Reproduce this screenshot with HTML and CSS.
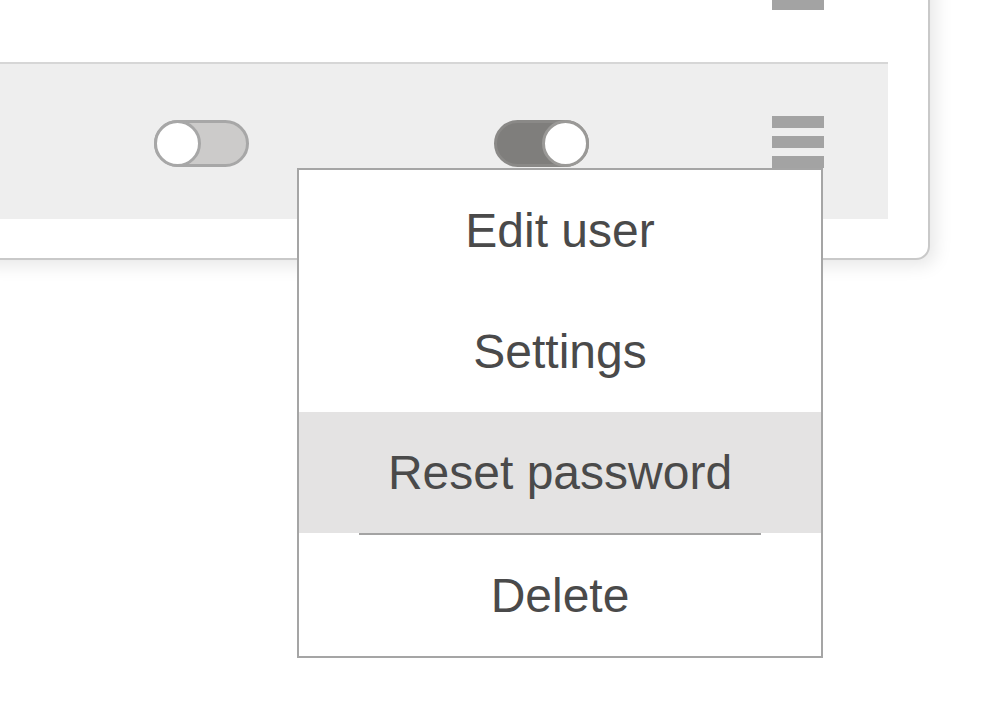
FILE: index.html
```html
<!DOCTYPE html>
<html lang="en">
<head>
<meta charset="utf-8">
<title>Users</title>
<link rel="stylesheet" href="styles.css">
</head>
<body>
<div class="page">
  <div class="card">
    <div class="row">
      <div class="cell"></div>
      <div class="cell"></div>
      <div class="cell"></div>
      <div class="cell"></div>
      <div class="cell"></div>
      <div class="cell menu-cell">
        <span class="burger"><i></i><i></i><i></i></span>
      </div>
    </div>
    <div class="row alt">
      <div class="cell"></div>
      <div class="cell"><span class="toggle"></span></div>
      <div class="cell"></div>
      <div class="cell"><span class="toggle on"></span></div>
      <div class="cell"></div>
      <div class="cell menu-cell">
        <span class="burger"><i></i><i></i><i></i></span>
        <ul class="menu">
          <li class="item">Edit user</li>
          <li class="item">Settings</li>
          <li class="item active">Reset password</li>
          <li class="sep"></li>
          <li class="item">Delete</li>
        </ul>
      </div>
    </div>
  </div>
</div>
</body>
</html>
```
FILE: styles.css
```css
html, body {
  margin: 0;
  padding: 0;
  background: #ffffff;
  font-family: "Liberation Sans", Arial, Helvetica, sans-serif;
}

.page {
  height: 726px;
  width: 988px;
  overflow: hidden;
}

.card {
  box-sizing: border-box;
  width: 960px;
  margin: -97px 0 0 -30px;
  padding: 0 40px 39px 0;
  border: 2px solid #c9c9c9;
  border-radius: 14px;
  background: #ffffff;
  box-shadow: 5px 5px 18px rgba(0, 0, 0, 0.10);
}

.row {
  display: grid;
  grid-template-columns: 182px 95px 245px 95px 183px 52px;
  align-items: center;
  height: 157px;
  box-sizing: border-box;
}

.row.alt {
  background: #eeeeee;
  border-top: 2px solid #d6d6d6;
}

.cell {
  display: flex;
  align-items: center;
}

.menu-cell {
  position: relative;
}

.burger {
  display: flex;
  flex-direction: column;
  gap: 8px;
  width: 52px;
}

.burger i {
  display: block;
  height: 12px;
  background: #a3a3a3;
}

.toggle {
  position: relative;
  display: block;
  box-sizing: border-box;
  width: 95px;
  height: 47px;
  margin-top: 4px;
  border: 3px solid #a7a7a7;
  border-radius: 24px;
  background: #cccbca;
}

.toggle::after {
  content: "";
  position: absolute;
  top: -3px;
  left: -3px;
  box-sizing: border-box;
  width: 47px;
  height: 47px;
  border-radius: 50%;
  background: #ffffff;
  border: 3px solid #a7a7a7;
}

.toggle.on {
  background: #7f7e7c;
  border-color: #8a8987;
}

.toggle.on::after {
  left: auto;
  right: -3px;
  border-color: #9a9997;
}

.menu {
  position: absolute;
  top: 100%;
  right: 1px;
  z-index: 5;
  box-sizing: border-box;
  width: 526px;
  margin: 0;
  padding: 0;
  list-style: none;
  background: #ffffff;
  border: 2px solid #a5a5a5;
}

.item {
  height: 121px;
  display: flex;
  align-items: center;
  justify-content: center;
  font-size: 48px;
  color: #4a4a4a;
}

.item.active {
  background: #e4e3e3;
}

.sep {
  height: 2px;
  margin: 0 60px;
  background: #a3a3a3;
}
```
